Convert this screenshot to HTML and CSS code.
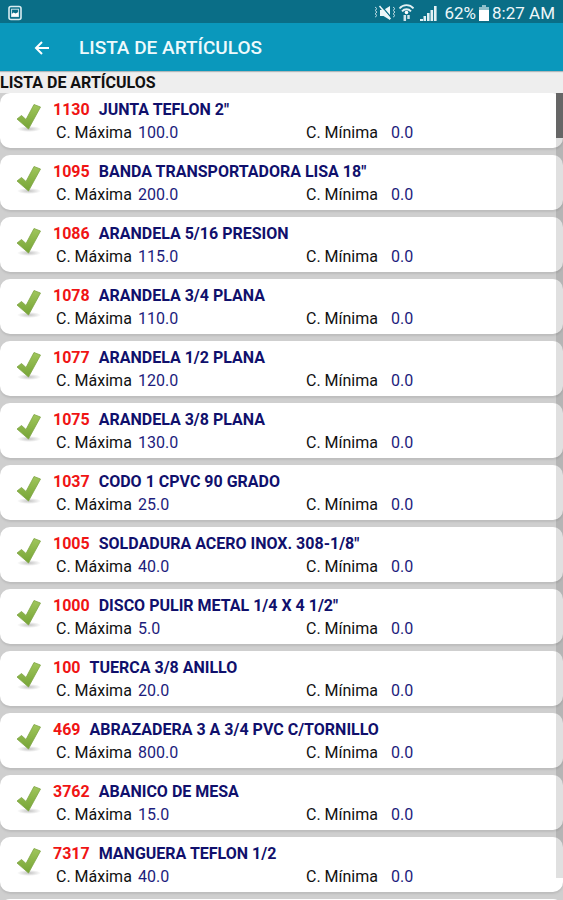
FILE: index.html
```html
<!DOCTYPE html>
<html lang="es">
<head>
    <meta charset="UTF-8">
    <meta name="viewport" content="width=device-width, initial-scale=1.0">
    <title>Lista de Artículos</title>
    <link rel="stylesheet" href="styles.css">
</head>
<body>
    <div class="status-bar">
        <svg class="picture-icon" width="14" height="16" viewBox="0 0 14 16">
            <rect x="1" y="1.500" width="12" height="13" rx="2" fill="none" stroke="#d9ecf0" stroke-width="1.6"/>
            <rect x="3.6" y="4.2" width="6.8" height="7.4" fill="none" stroke="#d9ecf0" stroke-width="0.9"/>
            <path d="M3.6 11.6V9l2-1.4 2 1 2.8-1.6v4.600z" fill="#fff"/>
        </svg>
        <div class="status-right">
            <svg width="40" height="18" viewBox="0 0 40 18">
                <path d="M6 6h3.500L16 2v14L9.500 12H6z" fill="#eef7f9"/>
                <path d="M7 1.500l11 13" stroke="#0a6e87" stroke-width="1.2"/>
                <path d="M5.500 2l11 13" stroke="#eef7f9" stroke-width="1.5"/>
                <path d="M1 3l2 1.700-2 1.700 2 1.700-2 1.700 2 1.700-2 1.700M19 3l2 1.700-2 1.700 2 1.700-2 1.700 2 1.700-2 1.700" fill="none" stroke="#b9d9e1" stroke-width="1"/>
                <path d="M25.500 4.500a9 9 0 0 1 14 0M28 7.300a6 6 0 0 1 9 0" fill="none" stroke="#e3f1f4" stroke-width="1.900"/>
                <circle cx="32.500" cy="8.500" r="1.800" fill="#fff"/>
                <path d="M30.800 17v-6M34.500 11v4" stroke="#cfe5eb" stroke-width="2.500"/>
            </svg>
            <svg class="signal-icon" width="17" height="16" viewBox="0 0 17 16">
                <path d="M0 14h3v2H0zM3.500 11h2.500v5h-2.500zM7 8h2.600v8H7zM10.500 5h2.600v11h-2.600zM14 1h2.600v15H14z" fill="#e3f1f4"/>
            </svg>
            <span class="battery-level">62%</span>
            <svg class="battery-icon" width="10" height="16" viewBox="0 0 10 16">
                <path d="M3 0h4v2h3v4H0V2h3z" fill="#8fbfcb"/>
                <path d="M0 5h10v11H0z" fill="#fff"/>
            </svg>
            <span>8:27 AM</span>
        </div>
    </div>

    <header class="app-bar">
        <button class="back-btn" aria-label="Regresar">
            <svg width="16" height="16" viewBox="0 0 16 16">
                <path d="M15 8H3M8 2L2 8l6 6" fill="none" stroke="#fff" stroke-width="2"/>
            </svg>
        </button>
        <h1>LISTA DE ARTÍCULOS</h1>
    </header>

    <h2 class="list-title">LISTA DE ARTÍCULOS</h2>

    <main class="list">
        <ul class="items" id="items"></ul>
        <div class="scrollbar"><div class="thumb"></div></div>
    </main>

    <svg class="defs" width="0" height="0">
        <defs>
            <linearGradient id="green" x1="0" y1="0" x2="0" y2="1">
                <stop offset="0" stop-color="#a0c65c"/>
                <stop offset="1" stop-color="#76a436"/>
            </linearGradient>
            <radialGradient id="shade">
                <stop offset="0" stop-color="#888" stop-opacity="0.5"/>
                <stop offset="1" stop-color="#888" stop-opacity="0"/>
            </radialGradient>
            <symbol id="check" viewBox="0 0 28 30">
                <ellipse cx="13" cy="26" rx="12" ry="3" fill="url(#shade)"/>
                <path d="M1 16L5.500 12.500 10 16.500 18 1.500 24.500 4 12.500 26z" fill="url(#green)" stroke="#7fa544" stroke-width="0.8" stroke-linejoin="round"/>
            </symbol>
        </defs>
    </svg>

    <script src="script.js"></script>
</body>
</html>
```

FILE: styles.css
```css
/* Global Styles */
body {
    font-family: Roboto, "Liberation Sans", sans-serif;
    background-color: #eeeeee;
    margin: 0;
    height: 100vh;
    display: flex;
    flex-direction: column;
    overflow: hidden;
    color: #111;
}

/* Status bar */
.status-bar {
    display: flex;
    align-items: center;
    justify-content: space-between;
    height: 23px;
    flex-shrink: 0;
    padding: 3px 8px 0;
    box-sizing: border-box;
    background-color: #0a6e87;
    color: #eef7f9;
    font-size: 17px;
}

.status-right {
    display: flex;
    align-items: center;
}

.signal-icon {
    margin: 0 8px 0 6px;
}

.battery-icon {
    margin: 0 3px;
}

/* App bar */
.app-bar {
    display: flex;
    align-items: center;
    height: 48px;
    flex-shrink: 0;
    padding: 1px 0 0 26px;
    box-sizing: border-box;
    background-color: #0a98bc;
    color: #eefafc;
    box-shadow: 0 1px 1px #b0b8ba;
    z-index: 1;
}

.back-btn {
    display: flex;
    padding: 8px;
    border: none;
    background: none;
    cursor: pointer;
}

h1 {
    margin: 0 0 0 21px;
    font-size: 19px;
    font-weight: 500;
}

.list-title {
    margin: 0;
    height: 22px;
    flex-shrink: 0;
    line-height: 24px;
    font-size: 16px;
    font-weight: 700;
}

/* Item list */
.list {
    position: relative;
    flex: 1;
    min-height: 0;
    overflow: hidden;
    background-color: #cfcfcf;
}

.items {
    list-style: none;
    margin: 0;
    padding: 0;
    display: flex;
    flex-direction: column;
    gap: 7px;
}

.item {
    display: flex;
    height: 55px;
    padding-left: 16px;
    background-color: #fff;
    border-radius: 10px;
    box-shadow: 0 2px 2px #bdbdbd;
}

.check-icon {
    width: 28px;
    height: 30px;
    margin-top: 10px;
}

.details {
    flex: 1;
    padding: 6px 0 0 9px;
}

.name {
    display: flex;
    gap: 9px;
    line-height: 22px;
    font-size: 16px;
    font-weight: 700;
    color: #10106c;
}

.code {
    color: #f01414;
}

.amounts {
    display: flex;
    padding-left: 3px;
    line-height: 23px;
    font-size: 16px;
}

.amounts span {
    width: 82px;
}

.amounts .min {
    width: 85px;
}

.amounts b {
    width: 168px;
    font-weight: 400;
    color: #1c1c7c;
}

/* Scrollbar */
.scrollbar {
    position: absolute;
    top: 0;
    right: 0;
    bottom: 22px;
    width: 7px;
    background-color: rgba(0, 0, 0, 0.12);
}

.thumb {
    height: 45px;
    background-color: #666;
}

.defs {
    position: absolute;
}
```

FILE: script.js
```js
const items = [
    ['1130', 'JUNTA TEFLON 2"', '100.0'],
    ['1095', 'BANDA TRANSPORTADORA LISA 18"', '200.0'],
    ['1086', 'ARANDELA 5/16 PRESION', '115.0'],
    ['1078', 'ARANDELA 3/4 PLANA', '110.0'],
    ['1077', 'ARANDELA 1/2 PLANA', '120.0'],
    ['1075', 'ARANDELA 3/8 PLANA', '130.0'],
    ['1037', 'CODO 1 CPVC 90 GRADO', '25.0'],
    ['1005', 'SOLDADURA ACERO INOX. 308-1/8"', '40.0'],
    ['1000', 'DISCO PULIR METAL 1/4 X 4 1/2"', '5.0'],
    ['100', 'TUERCA 3/8 ANILLO', '20.0'],
    ['469', 'ABRAZADERA 3 A 3/4 PVC C/TORNILLO', '800.0'],
    ['3762', 'ABANICO DE MESA', '15.0'],
    ['7317', 'MANGUERA TEFLON 1/2', '40.0']
];

const list = document.getElementById('items');
items.forEach(([code, name, max]) => {
    list.innerHTML += `
        <li class="item">
            <svg class="check-icon"><use href="#check"/></svg>
            <div class="details">
                <div class="name"><span class="code">${code}</span>${name}</div>
                <div class="amounts">
                    <span>C. Máxima</span><b>${max}</b>
                    <span class="min">C. Mínima</span><b>0.0</b>
                </div>
            </div>
        </li>
    `;
});
// Top edge of the next card
list.innerHTML += '<li class="item"></li>';
```
